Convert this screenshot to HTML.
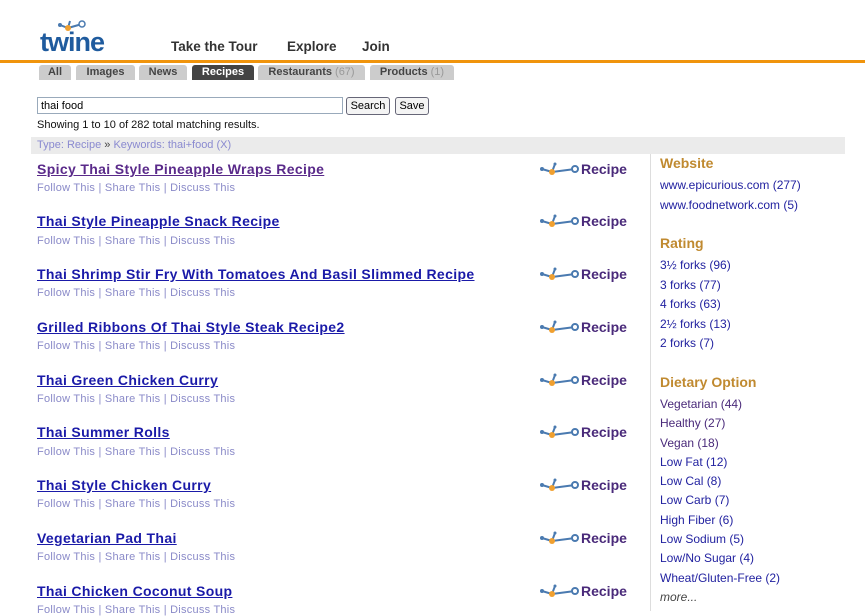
<!DOCTYPE html>
<html><head><meta charset="utf-8"><style>
body{margin:0;width:865px;height:611px;overflow:hidden;background:#fff;font-family:"Liberation Sans",Arial,sans-serif;position:relative}
.a{position:absolute;white-space:nowrap}
.nav{font-size:13.5px;font-weight:bold;color:#333;top:39px}
.tab{position:absolute;top:65px;height:15px;background:#ccc;border-radius:3px 3px 0 0;font-size:11px;font-weight:bold;color:#444;line-height:15px;text-align:center}
.tab span{color:#999;font-weight:normal}
.t{font-size:14px;font-weight:bold;color:#1a1aa8;text-decoration:underline;left:37px;letter-spacing:0.35px}
.f{font-size:11px;color:#8a8ac8;left:37px;letter-spacing:0.25px}
.r{left:540px;font-size:14px;font-weight:bold;color:#4a2a7a}
.r svg{vertical-align:-3px;margin-right:1px}
.h{left:660px;font-size:14px;font-weight:bold;color:#c08a30}
.l{left:660px;font-size:12px;color:#2222a0}
.v{color:#4a2a7a}
</style></head><body>
<div class="a" style="left:40px;top:29px;font-size:27px;font-weight:bold;color:#1f5b9e;letter-spacing:-1px;line-height:26px">twine</div>
<svg class="a" style="left:58px;top:18px" width="30" height="16"><path d="M2 7 L10 10 L12 3 M10 10 L24 6" stroke="#4a7ab0" stroke-width="2" fill="none"/><circle cx="2" cy="7" r="2" fill="#4a7ab0"/><circle cx="10" cy="10" r="3" fill="#f0a030"/><circle cx="24" cy="6" r="3" fill="#fff" stroke="#4a7ab0" stroke-width="1.5"/></svg>
<div class="a nav" style="left:171px">Take the Tour</div>
<div class="a nav" style="left:287px">Explore</div>
<div class="a nav" style="left:362px">Join</div>
<div class="a" style="left:0;top:60px;width:865px;height:3px;background:#f0940c"></div>
<div class="tab" style="left:39px;width:32px">All</div>
<div class="tab" style="left:76px;width:59px">Images</div>
<div class="tab" style="left:139px;width:48px">News</div>
<div class="tab" style="left:192px;width:62px;background:#444;color:#fff">Recipes</div>
<div class="tab" style="left:258px;width:107px">Restaurants <span>(67)</span></div>
<div class="tab" style="left:370px;width:84px">Products <span>(1)</span></div>
<div class="a" style="left:37px;top:97px;height:17px;border:1px solid #9ab;font-size:11px;line-height:17px;padding-left:3px;box-sizing:border-box;width:306px">thai food</div>
<div class="a" style="left:346px;top:97px;width:44px;height:18px;border:1px solid #667;border-radius:3px;font-size:11px;line-height:17px;text-align:center;background:#f4f4f4;box-sizing:border-box">Search</div>
<div class="a" style="left:395px;top:97px;width:34px;height:18px;border:1px solid #667;border-radius:3px;font-size:11px;line-height:17px;text-align:center;background:#f4f4f4;box-sizing:border-box">Save</div>
<div class="a" style="left:37px;top:119px;font-size:11px;color:#111">Showing 1 to 10 of 282 total matching results.</div>
<div class="a" style="left:31px;top:137px;width:814px;height:17px;background:#ebebeb;font-size:11px;line-height:17px;color:#8a8ad0;padding-left:6px;box-sizing:border-box">Type: Recipe <span style="color:#444">»</span> Keywords: thai+food (X)</div>
<div class="a" style="left:650px;top:154px;width:1px;height:457px;background:#ddd"></div>

<div class="a t" style="top:161px;color:#5a2a8a">Spicy Thai Style Pineapple Wraps Recipe</div><div class="a f" style="top:182px">Follow This | Share This | Discuss This</div>
<div class="a t" style="top:213px">Thai Style Pineapple Snack Recipe</div><div class="a f" style="top:235px">Follow This | Share This | Discuss This</div>
<div class="a t" style="top:266px">Thai Shrimp Stir Fry With Tomatoes And Basil Slimmed Recipe</div><div class="a f" style="top:287px">Follow This | Share This | Discuss This</div>
<div class="a t" style="top:319px">Grilled Ribbons Of Thai Style Steak Recipe2</div><div class="a f" style="top:340px">Follow This | Share This | Discuss This</div>
<div class="a t" style="top:372px">Thai Green Chicken Curry</div><div class="a f" style="top:393px">Follow This | Share This | Discuss This</div>
<div class="a t" style="top:424px">Thai Summer Rolls</div><div class="a f" style="top:446px">Follow This | Share This | Discuss This</div>
<div class="a t" style="top:477px">Thai Style Chicken Curry</div><div class="a f" style="top:498px">Follow This | Share This | Discuss This</div>
<div class="a t" style="top:530px">Vegetarian Pad Thai</div><div class="a f" style="top:551px">Follow This | Share This | Discuss This</div>
<div class="a t" style="top:583px">Thai Chicken Coconut Soup</div><div class="a f" style="top:604px">Follow This | Share This | Discuss This</div>

<svg width="0" height="0" style="position:absolute"><defs><symbol id="ic" viewBox="0 0 40 16"><path d="M2 8 L12 11 L15 3 M12 11 L35 8" stroke="#4a7ab0" stroke-width="2" fill="none"/><circle cx="2" cy="8" r="2" fill="#4a7ab0"/><circle cx="12" cy="11" r="3" fill="#f0a030"/><circle cx="15" cy="3" r="1.5" fill="#4a7ab0"/><circle cx="35" cy="8" r="3" fill="#fff" stroke="#4a7ab0" stroke-width="2"/></symbol></defs></svg>
<div class="a r" style="top:161px"><svg width="40" height="16"><use href="#ic"/></svg>Recipe</div>
<div class="a r" style="top:213px"><svg width="40" height="16"><use href="#ic"/></svg>Recipe</div>
<div class="a r" style="top:266px"><svg width="40" height="16"><use href="#ic"/></svg>Recipe</div>
<div class="a r" style="top:319px"><svg width="40" height="16"><use href="#ic"/></svg>Recipe</div>
<div class="a r" style="top:372px"><svg width="40" height="16"><use href="#ic"/></svg>Recipe</div>
<div class="a r" style="top:424px"><svg width="40" height="16"><use href="#ic"/></svg>Recipe</div>
<div class="a r" style="top:477px"><svg width="40" height="16"><use href="#ic"/></svg>Recipe</div>
<div class="a r" style="top:530px"><svg width="40" height="16"><use href="#ic"/></svg>Recipe</div>
<div class="a r" style="top:583px"><svg width="40" height="16"><use href="#ic"/></svg>Recipe</div>

<div class="a h" style="top:155px">Website</div>
<div class="a l" style="top:178px">www.epicurious.com (277)</div>
<div class="a l" style="top:198px">www.foodnetwork.com (5)</div>
<div class="a h" style="top:235px">Rating</div>
<div class="a l" style="top:258px">3½ forks (96)</div>
<div class="a l" style="top:278px">3 forks (77)</div>
<div class="a l" style="top:297px">4 forks (63)</div>
<div class="a l" style="top:317px">2½ forks (13)</div>
<div class="a l" style="top:336px">2 forks (7)</div>
<div class="a h" style="top:374px">Dietary Option</div>
<div class="a l v" style="top:397px">Vegetarian (44)</div>
<div class="a l v" style="top:416px">Healthy (27)</div>
<div class="a l v" style="top:436px">Vegan (18)</div>
<div class="a l" style="top:455px">Low Fat (12)</div>
<div class="a l" style="top:474px">Low Cal (8)</div>
<div class="a l" style="top:493px">Low Carb (7)</div>
<div class="a l" style="top:513px">High Fiber (6)</div>
<div class="a l" style="top:532px">Low Sodium (5)</div>
<div class="a l" style="top:551px">Low/No Sugar (4)</div>
<div class="a l" style="top:571px">Wheat/Gluten-Free (2)</div>
<div class="a l" style="top:590px;color:#444;font-style:italic">more...</div>
</body></html>
